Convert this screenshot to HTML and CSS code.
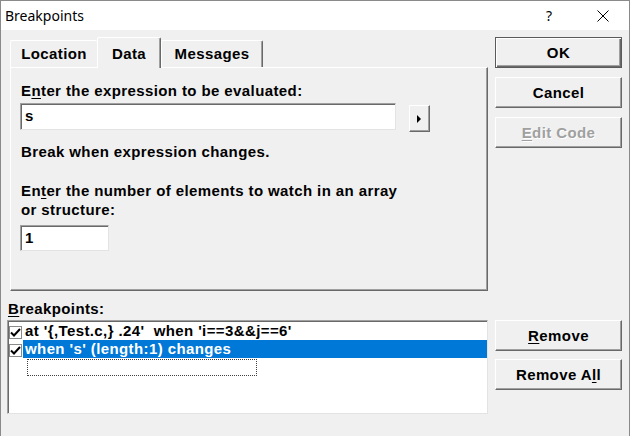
FILE: index.html
```html
<!DOCTYPE html>
<html>
<head>
<meta charset="utf-8">
<title>Breakpoints</title>
<link rel="stylesheet" href="styles.css">
</head>
<body>
<div class="window">
  <div class="titlebar">
    <span class="title">Breakpoints</span>
    <span class="help">?</span>
    <span class="close"><svg width="12" height="12" viewBox="0 0 12 12"><path d="M0.5 0.5L11.5 11.5M11.5 0.5L0.5 11.5" stroke="#000" stroke-width="1" fill="none"/></svg></span>
  </div>
  <div class="main">
    <div class="left">
      <div class="tabs">
        <div class="tab loc">Location</div>
        <div class="tab data active">Data</div>
        <div class="tab msg">Messages</div>
      </div>
      <div class="panel">
        <div class="label">E<u>n</u>ter the expression to be evaluated:</div>
        <div class="exprrow">
          <div class="field wide">s</div>
          <div class="arrowbtn"><svg width="5" height="8" viewBox="0 0 5 8"><path d="M0 0L4 4L0 8Z" fill="#000"/></svg></div>
        </div>
        <div class="label brk">Break when expression changes.</div>
        <div class="label num">En<u>t</u>er the number of elements to watch in an array<br>or structure:</div>
        <div class="field narrow">1</div>
      </div>
      <div class="label bplabel"><u>B</u>reakpoints:</div>
      <div class="listbox">
        <div class="row">
          <span class="chk"><svg width="13" height="13" viewBox="0 0 13 13"><rect x="0.5" y="0.5" width="12" height="12" fill="#fff" stroke="#8a8a8a"/><path d="M2 6.5L5 9.5L11 3" stroke="#000" stroke-width="2" fill="none"/></svg></span>
          <span class="rowtext">at '{,Test.c,} .24'  when 'i==3&amp;&amp;j==6'</span>
        </div>
        <div class="row sel">
          <span class="chk"><svg width="13" height="13" viewBox="0 0 13 13"><rect x="0.5" y="0.5" width="12" height="12" fill="#fff" stroke="#8a8a8a"/><path d="M2 6.5L5 9.5L11 3" stroke="#000" stroke-width="2" fill="none"/></svg></span>
          <span class="rowtext">when 's' (length:1) changes</span>
        </div>
        <div class="focusrow"></div>
      </div>
    </div>
    <div class="right">
      <div class="btn default">OK</div>
      <div class="btn gap">Cancel</div>
      <div class="btn gap disabled"><u>E</u>dit Code</div>
      <div class="btn remove"><u>R</u>emove</div>
      <div class="btn removeall">Remove A<u>l</u>l</div>
    </div>
  </div>
</div>
</body>
</html>
```
FILE: styles.css
```css
* { box-sizing: border-box; margin: 0; padding: 0; }
html, body { width: 630px; height: 436px; overflow: hidden; background: #f0f0f0; }
body {
  font-family: "Liberation Sans", Arial, sans-serif;
  font-weight: bold;
  font-size: 15px;
  letter-spacing: 0.4px;
  color: #000;
}
.window {
  width: 630px;
  height: 436px;
  border: 1px solid #8a8a8a;
  border-bottom: none;
  background: #f0f0f0;
}
.titlebar {
  height: 29px;
  background: #fff;
  display: flex;
  align-items: center;
  font-family: "Noto Sans", "Liberation Sans", sans-serif;
  font-weight: normal;
  font-size: 14px;
  letter-spacing: 0;
  padding-left: 4px;
}
.title { flex: 1; }
.help { width: 10px; text-align: center; margin-right: 43px; }
.close { width: 12px; height: 12px; margin-right: 20px; display: flex; }

.main {
  display: flex;
  gap: 7px;
  padding: 7px 0 0 6px;
}
.left { width: 481px; }
.right { width: 127px; display: flex; flex-direction: column; }

.tabs {
  display: flex;
  align-items: flex-end;
  height: 30px;
  margin-left: 3px;
}
.tab {
  height: 27px;
  text-align: center;
  line-height: 19px;
  padding-top: 3px;
  border-top: 1px solid #fff;
  border-left: 1px solid #fff;
  border-right: 1px solid #696969;
  box-shadow: inset -1px 0 #a0a0a0;
  border-radius: 2px 2px 0 0;
  background: #f0f0f0;
}
.tab.loc { width: 87px; border-right: none; box-shadow: none; }
.tab.data { width: 64px; }
.tab.msg { width: 102px; }
.tab.active {
  height: 31px;
  margin-bottom: -1px;
  padding-top: 6px;
  position: relative;
  z-index: 1;
}
.panel {
  margin-left: 3px;
  height: 224px;
  border-top: 1px solid #fff;
  border-left: 1px solid #fff;
  border-right: 1px solid #696969;
  border-bottom: 1px solid #696969;
  box-shadow: inset -1px -1px #a0a0a0;
  padding: 13px 0 0 10px;
}
.label { line-height: 19px; white-space: nowrap; }
.label u, .btn u { text-decoration: underline; text-underline-offset: 2px; }
.exprrow { display: flex; margin-top: 3px; }
.field {
  background: #fff;
  border-top: 1px solid #a0a0a0;
  border-left: 1px solid #a0a0a0;
  border-right: 1px solid #e3e3e3;
  border-bottom: 1px solid #e3e3e3;
  box-shadow: inset 1px 1px #696969;
  padding-left: 4px;
  line-height: 24px;
}
.field.wide { width: 376px; height: 27px; margin-left: -1px; }
.field.narrow { width: 89px; height: 26px; margin-left: -1px; margin-top: 6px; line-height: 23px; }
.arrowbtn {
  width: 21px;
  height: 27px;
  margin-left: 13px;
  margin-top: 2px;
  border-top: 1px solid #fff;
  border-left: 1px solid #fff;
  border-right: 1px solid #696969;
  border-bottom: 1px solid #696969;
  box-shadow: inset -1px -1px #a0a0a0;
  display: flex;
  align-items: center;
  justify-content: center;
}
.label.brk { margin-top: 10px; }
.label.num { margin-top: 20px; }
.label.bplabel { margin-top: 8px; padding-left: 1px; }

.listbox {
  margin-top: 2px;
  height: 94px;
  background: #fff;
  border: 1px solid #a0a0a0;
  border-right-color: #e3e3e3;
  border-bottom-color: #e3e3e3;
  box-shadow: inset 1px 1px #696969;
  padding: 1px 0 0 1px;
}
.row { display: flex; align-items: center; height: 18px; }
.chk { width: 13px; height: 13px; display: flex; margin-top: 2px; }
.rowtext {
  flex: 1;
  margin-left: 1px;
  padding-left: 2px;
  height: 18px;
  line-height: 18px;
  white-space: pre;
}
.row.sel .rowtext { background: #0078d7; color: #fff; }
.focusrow {
  margin: 1px 0 0 18px;
  width: 230px;
  height: 17px;
  border: 1px dotted #404040;
}

.btn {
  height: 31px;
  text-align: center;
  line-height: 29px;
  border: 1px solid;
  border-color: #fff #696969 #696969 #fff;
  box-shadow: inset -1px -1px #a0a0a0;
  background: #f0f0f0;
}
.btn.default {
  border-color: #5a5a5a;
  box-shadow: inset 1px 1px #fff, inset -1px -1px #696969, inset -2px -2px #a0a0a0;
}
.btn.gap { margin-top: 9px; }
.btn.disabled { color: #a0a0a0; text-shadow: 1px 1px #fff; }
.btn.remove { margin-top: 172px; }
.btn.removeall { margin-top: 8px; }
```
